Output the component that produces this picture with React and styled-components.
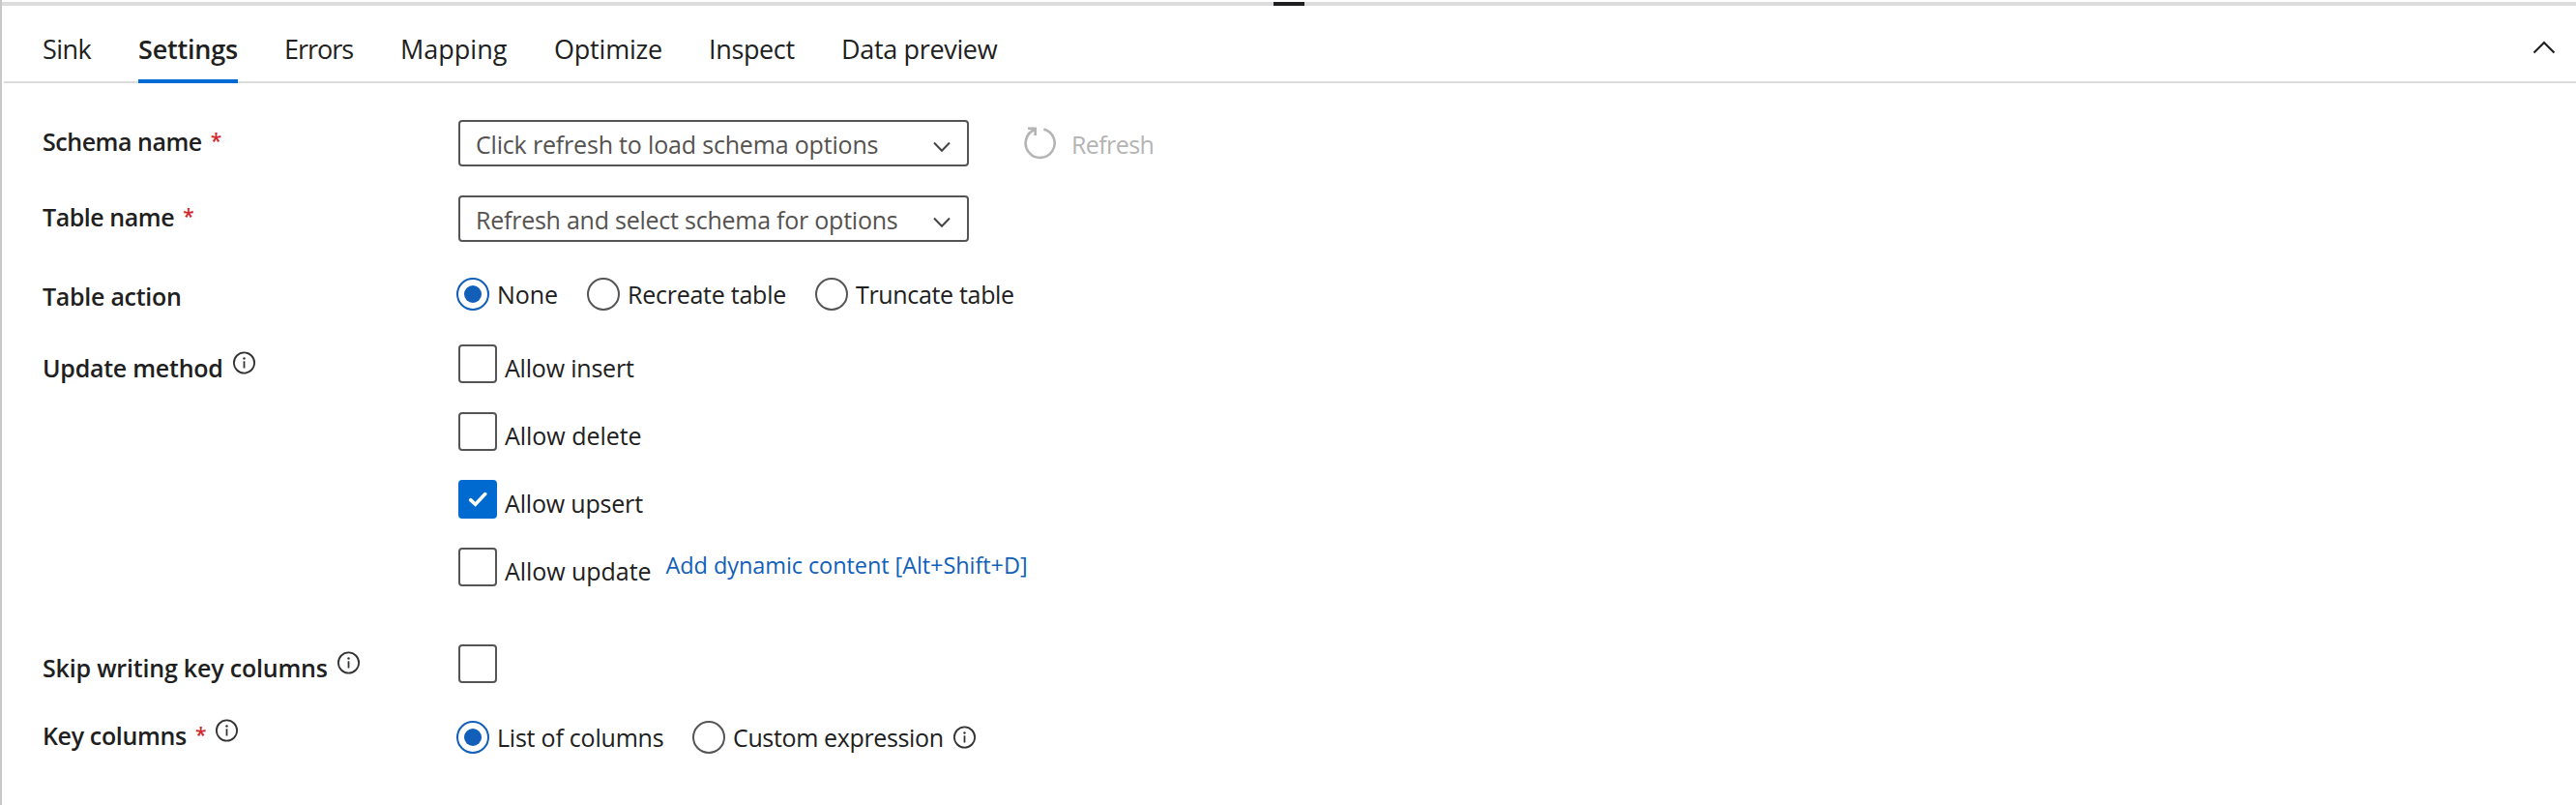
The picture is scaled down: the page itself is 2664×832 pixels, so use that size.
import React from 'react';
import styled, { createGlobalStyle } from 'styled-components';

const GlobalStyle = createGlobalStyle`
  * { box-sizing: border-box; }
  body {
    margin: 0;
    background: #fff;
    color: #202020;
    font-family: 'Segoe UI', 'Open Sans', 'Noto Sans', sans-serif;
  }
`;

const Panel = styled.div`
  width: 100%;
  height: 832px;
  padding-top: 2px;
  border-left: 2px solid #c8c8c8;
  overflow: hidden;
`;

const Splitter = styled.div`
  display: flex;
  justify-content: center;
  height: 4px;
  background: #dcdcdc;
`;

const SplitterHandle = styled.div`
  width: 32px;
  height: 4px;
  background: #1f1e21;
`;

const Header = styled.header`
  display: flex;
  justify-content: space-between;
  height: 80px;
  margin-left: 2px;
  padding: 0 21px 0 40px;
  box-shadow: inset 0 -2px 0 #dcdcdc;
`;

const TabList = styled.nav`
  display: flex;
  gap: 48px;
`;

const Tab = styled.a`
  width: ${(p) => p.$width}px;
  height: 80px;
  padding-top: 27px;
  border-bottom: 4px solid ${(p) => (p.$active ? '#006ad4' : 'transparent')};
  font-size: 27px;
  font-weight: ${(p) => (p.$active ? 600 : 400)};
  line-height: 36px;
  letter-spacing: ${(p) => p.$tracking}px;
  white-space: nowrap;
`;

const CollapseButton = styled.button`
  display: flex;
  align-items: flex-start;
  padding: 36px 0 0;
  border: 0;
  background: none;
  color: #222;
`;

const Form = styled.main`
  display: flex;
  flex-direction: column;
  padding: 38px 0 0 42px;
`;

const Field = styled.div`
  display: flex;
  align-items: flex-start;
  height: ${(p) => p.$height}px;
  margin-bottom: ${(p) => p.$gap || 0}px;
`;

const Label = styled.div`
  display: flex;
  align-items: flex-start;
  flex: none;
  width: 430px;
  padding-top: ${(p) => p.$top}px;
`;

const Text = styled.span`
  font-size: 25px;
  font-weight: ${(p) => (p.$bold ? 600 : 400)};
  line-height: 36px;
  letter-spacing: ${(p) => p.$tracking}px;
  white-space: nowrap;
`;

const Required = styled.span`
  width: 11px;
  margin-left: 9px;
  color: #cf2a30;
  font-size: 21px;
  font-weight: 600;
  line-height: 35px;
`;

const InfoSvg = styled.svg`
  flex: none;
  margin: ${(p) => p.$top}px 0 0 ${(p) => p.$left}px;
`;

const Select = styled.div`
  display: flex;
  align-items: center;
  justify-content: space-between;
  width: 528px;
  height: 48px;
  padding: 2px 17px 0 16px;
  border: 2px solid #555;
  border-radius: 4px;
  color: #555250;
`;

const ChevronSvg = styled.svg`
  flex: none;
  margin-top: 5px;
`;

const RefreshButton = styled.button`
  display: flex;
  align-items: flex-start;
  gap: 15px;
  margin: 7px 0 0 57px;
  padding: 0;
  border: 0;
  background: none;
  color: #b4b4b4;
  font-family: inherit;
`;

const RadioGroup = styled.div`
  display: flex;
  margin-left: -2px;
  padding-top: 2px;
`;

const RadioOption = styled.label`
  display: flex;
  align-items: flex-start;
  gap: 8px;
  min-width: ${(p) => p.$width || 0}px;
`;

const RadioCircle = styled.span`
  display: flex;
  align-items: center;
  justify-content: center;
  flex: none;
  width: 34px;
  height: 34px;
  margin-top: 1px;
  border: 2px solid ${(p) => (p.$checked ? '#115fb8' : '#555')};
  border-radius: 50%;

  &::after {
    content: '';
    width: 18px;
    height: 18px;
    border-radius: 50%;
    background: ${(p) => (p.$checked ? '#115fb8' : 'transparent')};
  }
`;

const CheckList = styled.div`
  display: flex;
  flex-direction: column;
  gap: 30px;
`;

const CheckRow = styled.div`
  display: flex;
  align-items: flex-start;
  height: 40px;
`;

const CheckBox = styled.span`
  flex: none;
  width: 40px;
  height: 40px;
  border: 2px solid ${(p) => (p.$checked ? '#006ad0' : '#555')};
  border-radius: 4px;
  background: ${(p) => (p.$checked ? '#006ad0' : '#fff')};
`;

const CheckLabel = styled.label`
  padding: 6px 0 0 8px;
  line-height: 0;
`;

const DynamicLink = styled.a`
  margin-left: 15px;
  color: #115fb8;
  font-size: 23.5px;
  line-height: 36px;
  letter-spacing: -0.08px;
  white-space: nowrap;
`;

const Chevron = () => (
  <ChevronSvg width="18" height="12" viewBox="0 0 18 12" fill="none" stroke="#444" strokeWidth="2">
    <path d="M1 1.5 9 9.7 17 1.5" />
  </ChevronSvg>
);

const Info = ({ top = 0.5, left = 10 }) => (
  <InfoSvg $top={top} $left={left} width="23" height="24" viewBox="0 0 23 24" fill="none" stroke="#333">
    <circle cx="11.5" cy="12" r="10.6" strokeWidth="1.8" />
    <path d="M11.5 10.3v7.2" strokeWidth="1.8" />
    <circle cx="11.5" cy="7.5" r="1.2" fill="#333" stroke="none" />
  </InfoSvg>
);

const RefreshIcon = () => (
  <svg width="34" height="34" viewBox="0 0 34 34" fill="none" stroke="currentColor" strokeWidth="2.6">
    <path d="M20.4 2.4A15 15 0 1 1 11.6 2.8" />
    <path d="M4 1.8h7.7v7.2" />
  </svg>
);

const Checkbox = ({ checked }) => (
  <CheckBox $checked={checked}>
    {checked && (
      <svg width="36" height="36" viewBox="2 2 36 36" fill="none" stroke="#fff" strokeWidth="3.6" strokeLinecap="round">
        <path d="M12.6 20.6 17.6 25.2 27.8 14.6" />
      </svg>
    )}
  </CheckBox>
);

const Radio = ({ checked, width, tracking, children, info }) => (
  <RadioOption $width={width}>
    <RadioCircle $checked={checked} />
    <Text $tracking={tracking}>{children}</Text>
    {info}
  </RadioOption>
);

const tabs = [
  { name: 'Sink', width: 51, tracking: -0.6 },
  { name: 'Settings', width: 103, tracking: -0.2, active: true },
  { name: 'Errors', width: 72, tracking: -1.0 },
  { name: 'Mapping', width: 111, tracking: 0 },
  { name: 'Optimize', width: 112, tracking: -0.2 },
  { name: 'Inspect', width: 89, tracking: -0.36 },
  { name: 'Data preview', width: 162, tracking: -0.34 },
];

const methods = [
  { name: 'Allow insert', tracking: -0.2 },
  { name: 'Allow delete', tracking: -0.03 },
  { name: 'Allow upsert', tracking: -0.18 },
  { name: 'Allow update', tracking: -0.05, dynamic: true },
].map((m) => ({ ...m, checked: m.name === 'Allow upsert' }));

export default function App() {
  return (
    <>
      <GlobalStyle />
      <Panel>
        <Splitter>
          <SplitterHandle />
        </Splitter>
        <Header>
          <TabList>
            {tabs.map((t) => (
              <Tab key={t.name} $width={t.width} $tracking={t.tracking} $active={t.active}>
                {t.name}
              </Tab>
            ))}
          </TabList>
          <CollapseButton aria-label="Collapse">
            <svg width="24" height="14" viewBox="0 0 24 14" fill="none" stroke="currentColor" strokeWidth="2.2">
              <path d="M1.5 12.5 12 2l10.5 10.5" />
            </svg>
          </CollapseButton>
        </Header>
        <Form>
          <Field $height={48} $gap={30}>
            <Label $top={4}>
              <Text $bold $tracking={-0.47}>Schema name</Text>
              <Required>*</Required>
            </Label>
            <Select>
              <Text $tracking={-0.18}>Click refresh to load schema options</Text>
              <Chevron />
            </Select>
            <RefreshButton>
              <RefreshIcon />
              <Text $tracking={-0.6}>Refresh</Text>
            </RefreshButton>
          </Field>
          <Field $height={48} $gap={34}>
            <Label $top={4}>
              <Text $bold $tracking={-0.45}>Table name</Text>
              <Required>*</Required>
            </Label>
            <Select>
              <Text $tracking={-0.24}>Refresh and select schema for options</Text>
              <Chevron />
            </Select>
          </Field>
          <Field $height={40} $gap={32}>
            <Label $top={4}>
              <Text $bold $tracking={-0.28}>Table action</Text>
            </Label>
            <RadioGroup>
              <Radio checked width={135} tracking={-0.1}>None</Radio>
              <Radio width={236} tracking={-0.25}>Recreate table</Radio>
              <Radio tracking={-0.33}>Truncate table</Radio>
            </RadioGroup>
          </Field>
          <Field $height={250} $gap={60}>
            <Label $top={6}>
              <Text $bold $tracking={-0.25}>Update method</Text>
              <Info />
            </Label>
            <CheckList>
              {methods.map((m) => (
                <CheckRow key={m.name}>
                  <Checkbox checked={m.checked} />
                  <CheckLabel>
                    <Text $tracking={m.tracking}>{m.name}</Text>
                  </CheckLabel>
                  {m.dynamic && <DynamicLink>Add dynamic content [Alt+Shift+D]</DynamicLink>}
                </CheckRow>
              ))}
            </CheckList>
          </Field>
          <Field $height={40} $gap={36}>
            <Label $top={6}>
              <Text $bold $tracking={-0.19}>Skip writing key columns</Text>
              <Info />
            </Label>
            <Checkbox />
          </Field>
          <Field $height={40}>
            <Label $top={0}>
              <Text $bold $tracking={-0.34}>Key columns</Text>
              <Required>*</Required>
              <Info />
            </Label>
            <RadioGroup>
              <Radio checked width={244} tracking={-0.22}>List of columns</Radio>
              <Radio tracking={-0.36} info={<Info top={5.5} left={2} />}>Custom expression</Radio>
            </RadioGroup>
          </Field>
        </Form>
      </Panel>
    </>
  );
}
